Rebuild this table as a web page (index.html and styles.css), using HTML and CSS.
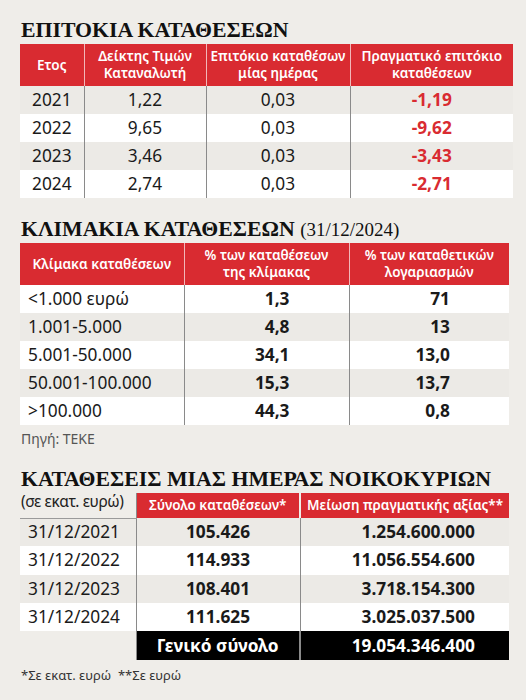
FILE: index.html
```html
<!DOCTYPE html>
<html lang="el">
<head>
<meta charset="utf-8">
<link rel="stylesheet" href="styles.css">
</head>
<body>
<div class="page">
  <section class="block b1">
    <h2 class="title">ΕΠΙΤΟΚΙΑ ΚΑΤΑΘΕΣΕΩΝ</h2>
    <table class="tbl t1">
      <colgroup><col style="width:64px"><col style="width:122px"><col style="width:144px"><col style="width:163px"></colgroup>
      <thead>
        <tr><th>Ετος</th><th>Δείκτης Τιμών<br>Καταναλωτή</th><th>Επιτόκιο καταθέσων<br>μίας ημέρας</th><th>Πραγματικό επιτόκιο<br>καταθέσεων</th></tr>
      </thead>
      <tbody>
        <tr class="g"><td class="l">2021</td><td class="c">1,22</td><td class="c">0,03</td><td class="c neg">-1,19</td></tr>
        <tr class="w"><td class="l">2022</td><td class="c">9,65</td><td class="c">0,03</td><td class="c neg">-9,62</td></tr>
        <tr class="g"><td class="l">2023</td><td class="c">3,46</td><td class="c">0,03</td><td class="c neg">-3,43</td></tr>
        <tr class="w"><td class="l">2024</td><td class="c">2,74</td><td class="c">0,03</td><td class="c neg">-2,71</td></tr>
      </tbody>
    </table>
  </section>

  <section class="block b2">
    <h2 class="title">ΚΛΙΜΑΚΙΑ ΚΑΤΑΘΕΣΕΩΝ <span class="date">(31/12/2024)</span></h2>
    <table class="tbl t2">
      <colgroup><col style="width:164px"><col style="width:165px"><col style="width:160px"></colgroup>
      <thead>
        <tr><th>Κλίμακα καταθέσεων</th><th>% των καταθέσεων<br>της κλίμακας</th><th>% των καταθετικών<br>λογαριασμών</th></tr>
      </thead>
      <tbody>
        <tr class="w"><td class="l2">&lt;1.000 ευρώ</td><td class="r b">1,3</td><td class="r b">71</td></tr>
        <tr class="g"><td class="l2">1.001-5.000</td><td class="r b">4,8</td><td class="r b">13</td></tr>
        <tr class="w"><td class="l2">5.001-50.000</td><td class="r b">34,1</td><td class="r b">13,0</td></tr>
        <tr class="g"><td class="l2">50.001-100.000</td><td class="r b">15,3</td><td class="r b">13,7</td></tr>
        <tr class="w"><td class="l2">&gt;100.000</td><td class="r b">44,3</td><td class="r b">0,8</td></tr>
      </tbody>
    </table>
    <p class="source">Πηγή: ΤΕΚΕ</p>
  </section>

  <section class="block b3">
    <h2 class="title">ΚΑΤΑΘΕΣΕΙΣ ΜΙΑΣ ΗΜΕΡΑΣ ΝΟΙΚΟΚΥΡΙΩΝ</h2>
    <table class="tbl t3">
      <colgroup><col style="width:116px"><col style="width:164px"><col style="width:209px"></colgroup>
      <thead>
        <tr><th class="unit">(σε εκατ. ευρώ)</th><th>Σύνολο καταθέσεων*</th><th>Μείωση πραγματικής αξίας**</th></tr>
      </thead>
      <tbody>
        <tr class="g"><td class="l2">31/12/2021</td><td class="c b">105.426</td><td class="r3 b">1.254.600.000</td></tr>
        <tr class="w"><td class="l2">31/12/2022</td><td class="c b">114.933</td><td class="r3 b">11.056.554.600</td></tr>
        <tr class="g"><td class="l2">31/12/2023</td><td class="c b">108.401</td><td class="r3 b">3.718.154.300</td></tr>
        <tr class="w"><td class="l2">31/12/2024</td><td class="c b">111.625</td><td class="r3 b">3.025.037.500</td></tr>
        <tr class="total"><td class="empty"></td><td class="c b">Γενικό σύνολο</td><td class="r3 b">19.054.346.400</td></tr>
      </tbody>
    </table>
    <p class="note">*Σε εκατ. ευρώ&nbsp; **Σε ευρώ</p>
  </section>
</div>
</body>
</html>
```

FILE: styles.css
```css
* { box-sizing: border-box; }
html, body { margin: 0; padding: 0; }
body {
  background: #efede9;
  font-family: "Noto Sans", "Open Sans", sans-serif;
  color: #1a1a1a;
  width: 526px;
  height: 700px;
  overflow: hidden;
}
.page {
  padding: 17px 0 0 20px;
}
.title {
  margin: 0 0 0 1px;
  font-family: "Liberation Serif", "DejaVu Serif", serif;
  font-weight: bold;
  font-size: 21.8px;
  line-height: 27px;
  color: #111;
  letter-spacing: 0;
}
.title .date {
  font-weight: normal;
  font-size: 19px;
  letter-spacing: 0;
}
.tbl {
  border-collapse: collapse;
  table-layout: fixed;
  margin-top: 0;
}
.tbl th {
  background: #d92b31;
  color: #fff;
  font-weight: 600;
  font-size: 13.5px;
  line-height: 17px;
  height: 42px;
  padding: 0 4px;
  text-align: center;
  vertical-align: middle;
  border-left: 1px solid #f2b7b9;
}
.tbl th:first-child { border-left: none; }
.tbl td {
  height: 28px;
  padding: 0;
  font-size: 17.3px;
  line-height: 20px;
  vertical-align: middle;
  border-left: 1px solid #8a8a8a;
}
.tbl td:first-child { border-left: none; }
.tbl tr.g td { background: #eceae6; }
.tbl tr.w td { background: #ffffff; }
.t1 { width: 493px; }
.t2, .t3 { width: 489px; }
.l { padding-left: 12px !important; }
.l2 { padding-left: 8px !important; }
.c { text-align: center; }
.r { text-align: right; padding-right: 59px !important; }
.r3 { text-align: right; padding-right: 34px !important; }
.b { font-weight: bold; }
.neg { color: #d92b31; font-weight: bold; }

.b2 { margin-top: 18px; }
.source {
  margin: 5px 0 0 1px;
  font-size: 14px;
  line-height: 17px;
  color: #555;
}
.b3 { margin-top: 19px; }
.t3 th { height: 25px; font-size: 13.5px; }
.t3 th.unit {
  background: transparent;
  color: #222;
  font-weight: normal;
  font-size: 15.5px;
  text-align: left;
  padding: 0 0 3px 1px;
  vertical-align: top;
  border-bottom: 1px solid #9a9a9a;
  letter-spacing: -0.4px;
}
.t3 th:nth-child(2) { border-left: 1px solid #8a8a8a; }
.t3 th:nth-child(3) { border-left: 2px solid #efede9; }
.t3 tbody tr:not(.total) td { height: 28.3px; }
.t3 tr.total td {
  background: #000;
  color: #fff;
  height: 29px;
}
.t3 tr.total td.empty { background: transparent; border-left: none; }
.t3 tr.total td:nth-child(3) { border-left: 2px solid #8a8a8a; }
.note {
  margin: 7px 0 0 1px;
  font-size: 13px;
  line-height: 16px;
  color: #333;
}
```
